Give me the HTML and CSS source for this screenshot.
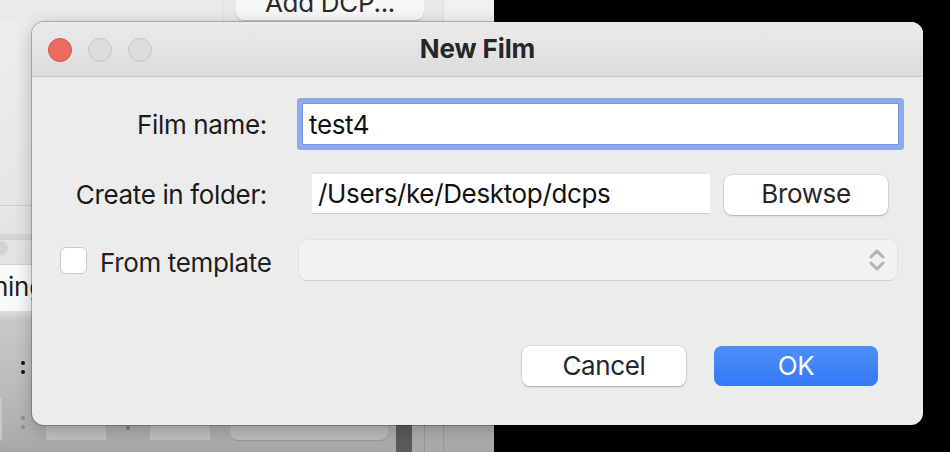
FILE: index.html
```html
<!DOCTYPE html>
<html lang="en">
<head>
<meta charset="utf-8">
<title>New Film</title>
<link rel="stylesheet" href="styles.css">
</head>
<body>
<div class="desk">
  <div class="app">
    <div class="app-top">
      <div class="app-pane-left"></div>
      <div class="app-pane-mid"><div class="app-btn">Add DCP...</div></div>
      <div class="app-pane-right"></div>
    </div>
    <div class="app-strip-line"></div>
    <div class="app-strip-band"></div>
    <div class="app-strip-circle"></div>
    <div class="app-strip-text">hing</div>
    <div class="app-dots d1"></div>
    <div class="app-dots d2"></div>
    <div class="app-dots d3"></div>
    <div class="app-box b0"></div>
    <div class="app-box b1"></div>
    <div class="app-box b2"></div>
    <div class="app-set">Set</div>
    <div class="app-bar"></div>
    <div class="app-col c1"></div>
    <div class="app-col c2"></div>
  </div>

  <div class="dialog">
    <div class="titlebar">
      <div class="lights">
        <span class="light red"></span>
        <span class="light grey"></span>
        <span class="light grey"></span>
      </div>
      <div class="title">New Film</div>
    </div>
    <div class="body">
      <div class="row row-name">
        <div class="label">Film name:</div>
        <div class="field focused">test4</div>
      </div>
      <div class="row row-folder">
        <div class="label">Create in folder:</div>
        <div class="field folder">/Users/ke/Desktop/dcps</div>
        <div class="btn browse">Browse</div>
      </div>
      <div class="row row-template">
        <div class="check"></div>
        <div class="check-label">From template</div>
        <div class="select">
          <svg class="chev" width="16" height="22" viewBox="0 0 16 22">
            <path d="M2 8 L8 2 L14 8" fill="none" stroke="#b4b4b4" stroke-width="3" stroke-linecap="round" stroke-linejoin="round"/>
            <path d="M2 14 L8 20 L14 14" fill="none" stroke="#b4b4b4" stroke-width="3" stroke-linecap="round" stroke-linejoin="round"/>
          </svg>
        </div>
      </div>
      <div class="row row-buttons">
        <div class="btn cancel">Cancel</div>
        <div class="btn ok">OK</div>
      </div>
    </div>
  </div>
</div>
</body>
</html>
```
FILE: styles.css
```css
html, body {
  margin: 0;
  padding: 0;
  width: 950px;
  height: 452px;
  overflow: hidden;
  background: #000;
  font-family: Inter, "Liberation Sans", Arial, sans-serif;
}

.desk {
  position: relative;
  width: 950px;
  height: 452px;
}

/* background application window */
.app {
  position: absolute;
  left: 0;
  top: 0;
  width: 494px;
  height: 452px;
  overflow: hidden;
  background: linear-gradient(180deg, #efefef 0px, #e6e6e6 200px, #e0e0e0 310px, #c9c9c9 320px, #b9b9b9 400px, #a8a8a8 452px);
}

.app-top {
  position: absolute;
  left: 0;
  top: 0;
  width: 494px;
  height: 22px;
  display: flex;
}
.app-pane-left { width: 222px; background: #ebebeb; border-right: 1px solid #dedede; }
.app-pane-mid { width: 220px; background: #e9e9e9; border-right: 1px solid #dddddd; position: relative; }
.app-pane-right { flex: 1; background: #f1f1f1; }
.app-btn {
  position: absolute;
  left: 13px;
  top: -14px;
  width: 188px;
  height: 34px;
  background: #f7f7f7;
  border-radius: 0 0 8px 8px;
  box-shadow: 0 1px 1px rgba(0,0,0,0.18);
  font-size: 26px;
  letter-spacing: -0.3px;
  line-height: 34px;
  color: #2a2a2a;
  text-align: center;
  overflow: hidden;
}

.app-strip-line { position: absolute; left: 0; top: 205px; width: 40px; height: 1px; background: #cfcfcf; }
.app-strip-band { position: absolute; left: 0; top: 234px; width: 40px; height: 5px; background: #d6d6d6; border-bottom: 1px solid #d0d0d0; }
.app-strip-circle { position: absolute; left: -6px; top: 241px; width: 14px; height: 14px; border-radius: 50%; background: #d4d4d4; }
.app-strip-text {
  position: absolute;
  left: -9px;
  top: 264px;
  width: 60px;
  height: 46px;
  padding-left: 2px;
  background: #f9f9f9;
  border-top: 1px solid #d4d4d4;
  font-size: 26px;
  letter-spacing: -0.3px;
  line-height: 44px;
  color: #1e1e1e;
}

.app-dots { position: absolute; width: 4px; height: 13px; }
.app-dots::before, .app-dots::after { content: ""; position: absolute; left: 0; width: 4px; height: 4px; border-radius: 50%; background: #111; }
.app-dots::before { top: 0; }
.app-dots::after { top: 9px; }
.d1 { left: 21px; top: 361px; }
.d2 { left: 21px; top: 416px; }
.d2::before, .d2::after { background: #8d8d8d; }
.d3 { left: 126px; top: 417px; }
.d3::before { background: transparent; }
.d3::after { background: #7d7d7d; }

.app-box { position: absolute; top: 398px; height: 42px; background: #c0c0c0; border-bottom: 1px solid #b2b2b2; }
.b0 { left: -4px; width: 6px; background: #c8c8c8; }
.b1 { left: 46px; width: 60px; }
.b2 { left: 150px; width: 60px; }
.app-set {
  position: absolute;
  left: 230px;
  top: 394px;
  width: 158px;
  height: 46px;
  border-radius: 8px;
  background: #bcbcbc;
  box-shadow: 0 1px 1px rgba(0,0,0,0.12);
  font-size: 26px;
  line-height: 40px;
  color: #8c8c8c;
  text-align: center;
}
.app-bar { position: absolute; left: 396px; top: 400px; width: 16px; height: 52px; background: #5b5b5b; }
.app-col { position: absolute; top: 400px; height: 52px; width: 1px; background: #9a9a9a; }
.c1 { left: 424px; }
.c2 { left: 443px; }

/* dialog */
.dialog {
  position: absolute;
  left: 32px;
  top: 22px;
  width: 891px;
  height: 403px;
  border-radius: 12px;
  background: #ececec;
  overflow: hidden;
  box-shadow: 0 0 0 1px rgba(0,0,0,0.22), 0 4px 18px rgba(0,0,0,0.25);
  display: flex;
  flex-direction: column;
  color: #1f1f1f;
  letter-spacing: -0.35px;
}

.titlebar {
  position: relative;
  height: 54px;
  flex: none;
  background: linear-gradient(180deg, #ebebeb 0%, #dcdcdc 100%);
  border-bottom: 1px solid #c6c6c6;
  display: flex;
  align-items: center;
  justify-content: center;
}
.lights {
  position: absolute;
  left: 16px;
  top: 16px;
  display: flex;
  gap: 16px;
}
.light {
  width: 22px;
  height: 22px;
  border-radius: 50%;
  box-sizing: content-box;
}
.light.red { background: #ed6a5e; border: 1px solid #d6534a; }
.light.grey { background: #dcdcdc; border: 1px solid #c5c5c5; }
.title {
  font-size: 26px;
  font-weight: 700;
  color: #262626;
  letter-spacing: -0.1px;
  margin-top: -2px;
}

.body {
  flex: 1;
  display: flex;
  flex-direction: column;
}

.row {
  display: flex;
  align-items: center;
}

.label {
  width: 235px;
  text-align: right;
  font-size: 26px;
  color: #1b1b1b;
  flex: none;
}

.field {
  box-sizing: border-box;
  background: #fff;
  font-size: 26px;
  color: #111;
  display: flex;
  align-items: center;
  white-space: nowrap;
  overflow: hidden;
}

.row-name { margin-top: 27px; height: 40px; }
.field.focused {
  margin-left: 36px;
  width: 595px;
  height: 40px;
  padding-left: 6px;
  border-radius: 1px;
  box-shadow: 0 0 0 1px #6f95e8, 0 0 0 6px #8eaaec;
}

.row-folder { margin-top: 29px; height: 42px; }
.field.folder {
  margin-left: 45px;
  width: 398px;
  height: 41px;
  padding-left: 6px;
  border-top: 1px solid #e2e2e2;
  border-bottom: 1px solid #d2d2d2;
  align-self: flex-start;
}

.btn {
  box-sizing: border-box;
  height: 40px;
  width: 164px;
  border-radius: 8px;
  font-size: 26px;
  display: flex;
  align-items: center;
  justify-content: center;
  flex: none;
  padding-bottom: 2px;
}
.browse {
  margin-left: 14px;
  background: #fff;
  color: #262626;
  box-shadow: 0 0 0 0.5px rgba(0,0,0,0.12), 0 1px 2px rgba(0,0,0,0.22);
  align-self: flex-end;
  padding-bottom: 4px;
}

.row-template { margin-top: 25px; height: 40px; }
.check {
  margin-left: 28px;
  width: 27px;
  height: 27px;
  box-sizing: border-box;
  border-radius: 6px;
  background: #fff;
  border: 1px solid #c9c9c9;
  flex: none;
}
.check-label {
  margin-left: 13px;
  padding-top: 4px;
  font-size: 26px;
  color: #1f1f1f;
  width: 199px;
  flex: none;
}
.select {
  width: 598px;
  height: 40px;
  border-radius: 8px;
  background: linear-gradient(180deg, #f3f3f3 0%, #f1f1f1 100%);
  box-shadow: 0 0 0 0.5px rgba(0,0,0,0.06), 0 1px 1px rgba(0,0,0,0.1);
  display: flex;
  align-items: center;
  justify-content: flex-end;
  padding-right: 12px;
  box-sizing: border-box;
}
.chev { display: block; }

.row-buttons { margin-top: 66px; height: 40px; padding-left: 490px; }
.cancel {
  background: #fff;
  color: #262626;
  box-shadow: 0 0 0 0.5px rgba(0,0,0,0.12), 0 1px 2px rgba(0,0,0,0.25);
}
.ok {
  margin-left: 28px;
  background: linear-gradient(180deg, #4b90f8 0%, #3478f6 100%);
  color: #fff;
}
```
